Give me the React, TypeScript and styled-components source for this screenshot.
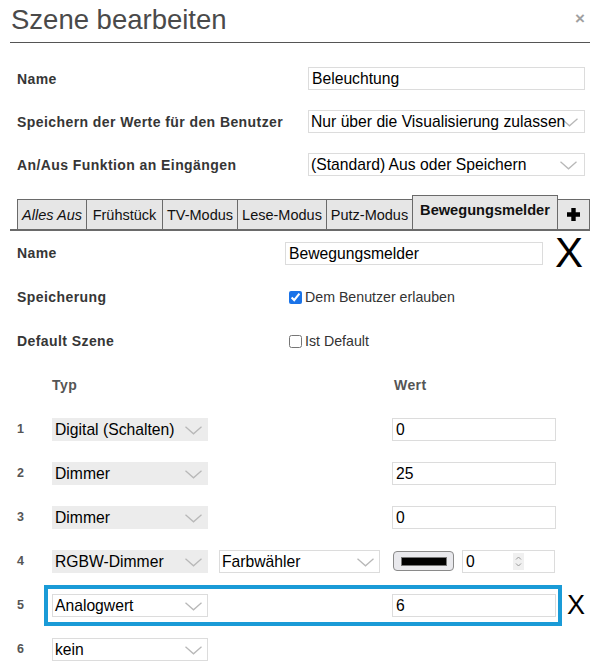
import React from "react";
import styled, { createGlobalStyle } from "styled-components";

const Global = createGlobalStyle`
  html, body { margin: 0; padding: 0; background: #fff; }
  body { font-family: "Liberation Sans", Arial, sans-serif; color: #333; }
  * { box-sizing: border-box; }
`;

const Dialog = styled.div`
  width: 604px;
  padding: 0 14px 0 10px;
`;

const Header = styled.div`
  height: 43px;
  display: flex;
  align-items: center;
  justify-content: space-between;
  border-bottom: 1px solid #555;
`;

const Title = styled.h1`
  margin: 0 0 0 1px;
  font-size: 27.5px;
  font-weight: normal;
  color: #4a4a4a;
  line-height: 30px;
  padding-bottom: 3px;
`;

const Close = styled.span`
  font-size: 17px;
  font-weight: bold;
  color: #a0a0a0;
  margin-right: 5px;
  padding-bottom: 4px;
`;

const Settings = styled.div`
  margin-top: 14px;
  padding-left: 7px;
`;

const SettingRow = styled.div`
  display: grid;
  grid-template-columns: 291px 277px;
  align-items: center;
  height: 43px;
`;

const Label = styled.span`
  font-size: 14px;
  font-weight: bold;
  letter-spacing: 0.42px;
  color: #363636;
`;

const TextInput = styled.div<{ $w?: number }>`
  width: ${(p) => (p.$w ? `${p.$w}px` : "100%")};
  height: 23px;
  border: 1px solid #dcdcdc;
  background: #fff;
  font-size: 15.7px;
  color: #000;
  line-height: 21px;
  padding-left: 3px;
  white-space: nowrap;
  overflow: hidden;
`;

const SelectBox = styled.div<{ $w?: number; $grey?: boolean }>`
  position: relative;
  width: ${(p) => (p.$w ? `${p.$w}px` : "100%")};
  height: 23px;
  border: 1px solid ${(p) => (p.$grey ? "#ececec" : "#dcdcdc")};
  background: ${(p) => (p.$grey ? "#ececec" : "#fff")};
  font-size: 15.7px;
  color: #000;
  line-height: 21px;
  padding-left: 2px;
  white-space: nowrap;
`;

const SelectText = styled.span`
  position: relative;
  z-index: 1;
`;

const ChevronWrap = styled.span<{ $right: number }>`
  position: absolute;
  right: ${(p) => p.$right}px;
  top: 7px;
  width: 17px;
  height: 9px;
  display: flex;
`;

const Chevron = ({ right = 5 }: { right?: number }) => (
  <ChevronWrap $right={right}>
    <svg width="17" height="9" viewBox="0 0 17 9">
      <polyline points="0.5,0.8 8.5,7.8 16.5,0.8" fill="none" stroke="#b8b8b8" strokeWidth="1.3" />
    </svg>
  </ChevronWrap>
);

const Select = ({ value, w, grey, right }: { value: string; w?: number; grey?: boolean; right?: number }) => (
  <SelectBox $w={w} $grey={grey}>
    <Chevron right={right} />
    <SelectText>{value}</SelectText>
  </SelectBox>
);

const TabBar = styled.div`
  margin-top: 9px;
  height: 36px;
  display: flex;
  align-items: flex-end;
  padding-left: 7px;
  border-bottom: 2px solid #6a6a6a;
`;

const Tab = styled.div<{ $active?: boolean; $italic?: boolean; $w: number }>`
  width: ${(p) => p.$w}px;
  height: ${(p) => (p.$active ? 34 : 30)}px;
  padding-top: ${(p) => (p.$active ? 6 : 0)}px;
  display: flex;
  justify-content: center;
  align-items: ${(p) => (p.$active ? "flex-start" : "center")};
  background: #e6e6e6;
  border: 1px solid #6a6a6a;
  border-bottom: none;
  margin-left: -1px;
  font-size: ${(p) => (p.$active ? 14.6 : 14.5)}px;
  color: #111;
  font-weight: ${(p) => (p.$active ? "bold" : "normal")};
  font-style: ${(p) => (p.$italic ? "italic" : "normal")};
  white-space: nowrap;
  &:first-child { margin-left: 0; }
`;

const Content = styled.div`
  padding-left: 7px;
`;

const FieldRow = styled.div`
  display: flex;
  align-items: center;
  height: 44px;
`;

const FieldLabel = styled(Label)`
  width: 268px;
  flex: none;
`;

const BigX = styled.span<{ $size: number; $ml: number }>`
  font-size: ${(p) => p.$size}px;
  line-height: 1;
  color: #000;
  margin-left: ${(p) => p.$ml}px;
`;

const CheckLabel = styled.label`
  display: flex;
  align-items: center;
  font-size: 14.2px;
  color: #333;
  input { margin: 0 3px 0 4px; width: 13px; height: 13px; accent-color: #1a73e8; }
`;

const TableRow = styled.div`
  display: flex;
  align-items: center;
  height: 44px;
`;

const Num = styled.span`
  width: 27px;
  flex: none;
  font-size: 12.5px;
  font-weight: bold;
  color: #555;
`;

const Cells = styled.div<{ $hl?: boolean }>`
  width: 518px;
  height: 41px;
  border: 4px solid ${(p) => (p.$hl ? "#1a9bd7" : "transparent")};
  padding: 0 2px 0 4px;
  display: grid;
  grid-template-columns: 156px 161px 164px;
  column-gap: 11px;
  align-items: center;
  & > :nth-child(3) { margin-left: 1px; }
`;

const HeadCell = styled(Label)<{ $pad?: number }>`
  color: #555;
  padding-left: ${(p) => p.$pad ?? 0}px;
`;

const Slot = styled.div``;

const ColorGroup = styled.div`
  display: flex;
  align-items: center;
  gap: 8px;
`;

const ColorButton = styled.div`
  width: 61px;
  height: 20px;
  margin-left: 1px;
  border: 1px solid #8a8a8a;
  border-radius: 4px;
  background: #e9e9ed;
  display: flex;
  align-items: center;
  justify-content: center;
`;

const Swatch = styled.div`
  width: 46px;
  height: 9px;
  background: #000;
  border: 1px solid #777;
`;

const NumberInput = styled(TextInput)`
  position: relative;
  width: 93px;
  height: 23px;
`;

const Spinner = styled.span`
  position: absolute;
  left: 50px;
  top: 2px;
  width: 11px;
  height: 17px;
  background: #f0f0f0;
  display: flex;
`;

const tabs = [
  { label: "Alles Aus", w: 70, italic: true },
  { label: "Frühstück", w: 77 },
  { label: "TV-Modus", w: 76 },
  { label: "Lese-Modus", w: 90 },
  { label: "Putz-Modus", w: 87 },
];

const rows = [
  { n: 1, typ: "Digital (Schalten)", grey: true, val: "0" },
  { n: 2, typ: "Dimmer", grey: true, val: "25" },
  { n: 3, typ: "Dimmer", grey: true, val: "0" },
];

export default function App() {
  return (
    <>
      <Global />
      <Dialog>
        <Header>
          <Title>Szene bearbeiten</Title>
          <Close>×</Close>
        </Header>
        <Settings>
          <SettingRow>
            <Label>Name</Label>
            <TextInput>Beleuchtung</TextInput>
          </SettingRow>
          <SettingRow>
            <Label>Speichern der Werte für den Benutzer</Label>
            <Select value="Nur über die Visualisierung zulassen" right={6} />
          </SettingRow>
          <SettingRow>
            <Label>An/Aus Funktion an Eingängen</Label>
            <Select value="(Standard) Aus oder Speichern" right={7} />
          </SettingRow>
        </Settings>
        <TabBar>
          {tabs.map((t) => (
            <Tab key={t.label} $w={t.w} $italic={t.italic}>
              {t.label}
            </Tab>
          ))}
          <Tab $active $w={146}>Bewegungsmelder</Tab>
          <Tab $w={33}>
            <svg width="13" height="13" viewBox="0 0 13 13">
              <path d="M4.3 0h4.4v4.3h4.3v4.4h-4.3v4.3h-4.4v-4.3h-4.3v-4.4h4.3z" fill="#000" />
            </svg>
          </Tab>
        </TabBar>
        <Content>
          <FieldRow>
            <FieldLabel>Name</FieldLabel>
            <TextInput $w={258}>Bewegungsmelder</TextInput>
            <BigX $size={42} $ml={12}>X</BigX>
          </FieldRow>
          <FieldRow>
            <FieldLabel>Speicherung</FieldLabel>
            <CheckLabel>
              <input type="checkbox" defaultChecked />
              Dem Benutzer erlauben
            </CheckLabel>
          </FieldRow>
          <FieldRow>
            <FieldLabel>Default Szene</FieldLabel>
            <CheckLabel>
              <input type="checkbox" />
              Ist Default
            </CheckLabel>
          </FieldRow>
          <TableRow>
            <Num />
            <Cells>
              <HeadCell>Typ</HeadCell>
              <Slot />
              <HeadCell $pad={2}>Wert</HeadCell>
            </Cells>
          </TableRow>
          {rows.map((r) => (
            <TableRow key={r.n}>
              <Num>{r.n}</Num>
              <Cells>
                <Select value={r.typ} grey={r.grey} />
                <Slot />
                <TextInput>{r.val}</TextInput>
              </Cells>
            </TableRow>
          ))}
          <TableRow>
            <Num>4</Num>
            <Cells>
              <Select value="RGBW-Dimmer" grey />
              <Select value="Farbwähler" />
              <ColorGroup>
                <ColorButton>
                  <Swatch />
                </ColorButton>
                <NumberInput>
                  0
                  <Spinner>
                    <svg width="11" height="17" viewBox="0 0 11 17">
                      <polyline points="3,6.5 5.5,4 8,6.5" fill="none" stroke="#999" strokeWidth="1" />
                      <polyline points="3,10.5 5.5,13 8,10.5" fill="none" stroke="#999" strokeWidth="1" />
                    </svg>
                  </Spinner>
                </NumberInput>
              </ColorGroup>
            </Cells>
          </TableRow>
          <TableRow>
            <Num>5</Num>
            <Cells $hl>
              <Select value="Analogwert" />
              <Slot />
              <TextInput>6</TextInput>
            </Cells>
            <BigX $size={27} $ml={5}>X</BigX>
          </TableRow>
          <TableRow>
            <Num>6</Num>
            <Cells>
              <Select value="kein" />
            </Cells>
          </TableRow>
        </Content>
      </Dialog>
    </>
  );
}
